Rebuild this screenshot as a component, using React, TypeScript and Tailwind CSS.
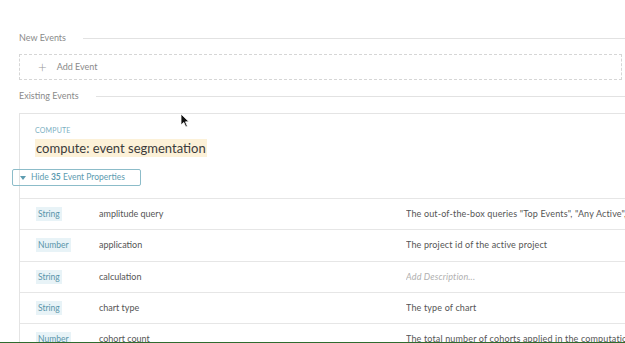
import React from 'react';

const rows = [
  { type: 'String', name: 'amplitude query', desc: 'The out-of-the-box queries "Top Events", "Any Active", "New User"' },
  { type: 'Number', name: 'application', desc: 'The project id of the active project' },
  { type: 'String', name: 'calculation', desc: '' },
  { type: 'String', name: 'chart type', desc: 'The type of chart' },
  { type: 'Number', name: 'cohort count', desc: 'The total number of cohorts applied in the computation' },
];

const SectionLabel: React.FC<{ label: string }> = ({ label }) => (
  <div className="flex items-center h-[18px]">
    <span className="text-[9px] text-[#8a8a8a] pr-[17px] whitespace-nowrap">{label}</span>
    <div className="flex-1 h-px bg-[#e2e2e2]" />
  </div>
);

const Cursor: React.FC = () => (
  <svg className="absolute left-[180px] top-[113px]" width="10" height="15" viewBox="0 0 10 15">
    <path d="M1 1 L1 12 L3.8 9.4 L5.8 14 L7.4 13.3 L5.5 8.8 L9 8.8 Z" fill="#111" stroke="#fff" strokeWidth="0.8" />
  </svg>
);

export default function App() {
  return (
    <div
      className="relative w-[625px] h-[343px] overflow-hidden bg-white"
      style={{ fontFamily: 'Lato, "Open Sans", sans-serif' }}
    >
      <div className="pl-[19px] pt-[29px]">
        <SectionLabel label="New Events" />
        <div className="mt-[7px] mr-[3px] h-[26px] border border-dashed border-[#d6d6d6] flex items-center pl-[18px]">
          <span className="text-[#9a9a9a] text-[15px] font-light leading-none">+</span>
          <span className="ml-[10px] text-[9px] text-[#8a8a8a]">Add Event</span>
        </div>
        <div className="mt-[7px]">
          <SectionLabel label="Existing Events" />
        </div>
        <div className="mt-[8px] border-l border-t border-[#e4e4e4] h-[240px]">
          <div className="pl-[15px] pt-[11px]">
            <div className="text-[7px] tracking-[0.2px] text-[#7bb0c2] uppercase leading-[10px]">Compute</div>
            <div className="mt-[2px] inline-block bg-[#fcf1d8] px-[1px] text-[13px] leading-[18px] text-[#3b3b3b]">
              compute: event segmentation
            </div>
          </div>
          <div className="-ml-[8px] mt-[10px] w-[129px] h-[17px] border border-[#8cbcc9] rounded-[2px] flex items-center pl-[7px]">
            <svg width="6" height="4" viewBox="0 0 6 4">
              <path d="M0 0 L6 0 L3 4 Z" fill="#5d9cb0" />
            </svg>
            <span className="ml-[5px] text-[8.5px] text-[#5d9cb0] whitespace-nowrap">
              Hide <span className="font-bold">35</span> Event Properties
            </span>
          </div>
          <div className="mt-[12px] border-t border-[#e6e6e6]">
            {rows.map((r) => (
              <div key={r.name} className="h-[31.25px] border-b border-[#e6e6e6] flex items-center">
                <div className="w-[79px] pl-[16px] flex items-center">
                  <span className="block bg-[#e8f3f7] text-[#5a95aa] text-[8.5px] leading-[14px] px-[2px]">{r.type}</span>
                </div>
                <div className="w-[307px] text-[9px] leading-[14px] text-[#555]">{r.name}</div>
                <div className="flex-1 text-[9px] leading-[14px] tracking-[0.15px] whitespace-nowrap overflow-hidden">
                  {r.desc ? (
                    <span className="text-[#555]">{r.desc}</span>
                  ) : (
                    <span className="italic text-[#b0b0b0]">Add Description...</span>
                  )}
                </div>
              </div>
            ))}
          </div>
        </div>
      </div>
      <Cursor />
      <div className="absolute left-0 right-0 bottom-0 h-px bg-[#2f6b2f]" />
    </div>
  );
}
